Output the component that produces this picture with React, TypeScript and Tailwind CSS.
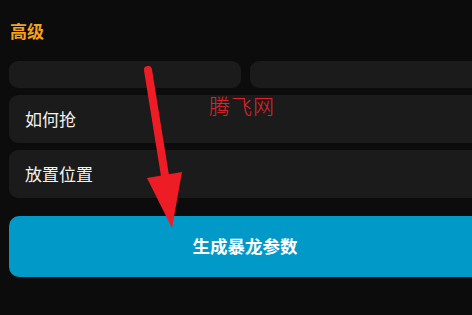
export default function App() {
  return (
    <div
      className="relative w-[472px] h-[315px] overflow-hidden bg-[#0c0c0c]"
      style={{ fontFamily: '"Noto Sans CJK SC", "Noto Sans", sans-serif' }}
    >
      <div className="w-[490px] px-[9px] pt-[19px]">
        {/* Section title */}
        <div className="h-[24px] pl-px text-[17px] leading-[24px] font-bold text-[#f5a21c]">高级</div>

        {/* Two empty fields */}
        <div className="mt-[18px] grid grid-cols-2 gap-[9px]">
          <div className="h-[27px] rounded-[9px] bg-[#1b1b1b]" />
          <div className="h-[27px] rounded-[9px] bg-[#1b1b1b]" />
        </div>

        {/* Option rows */}
        <div className="mt-[7px] flex flex-col gap-[7px]">
          <div className="h-[48px] rounded-[9px] bg-[#1b1b1b] flex items-center px-4 text-[17px] text-[#f2f2f2]">
            如何抢
          </div>
          <div className="h-[48px] rounded-[9px] bg-[#1b1b1b] flex items-center px-4 text-[17px] text-[#f2f2f2]">
            放置位置
          </div>
        </div>

        {/* Generate button */}
        <button className="mt-[18px] w-full h-[61px] rounded-[10px] bg-[#0099c8] flex items-center justify-center text-[17.5px] font-bold text-white">
          生成暴龙参数
        </button>
      </div>

      {/* Watermark */}
      <div className="absolute left-[209px] top-[90px] text-[21px] font-light tracking-[1px] text-[#e3232c]">
        腾飞网
      </div>

      {/* Annotation arrow */}
      <svg className="absolute inset-0 pointer-events-none" width="472" height="315" viewBox="0 0 472 315">
        <line x1="148" y1="70" x2="166" y2="182" stroke="#ee1c25" strokeWidth="8" strokeLinecap="round" />
        <polygon points="147,178 182,172 172,228" fill="#ee1c25" />
      </svg>
    </div>
  );
}
